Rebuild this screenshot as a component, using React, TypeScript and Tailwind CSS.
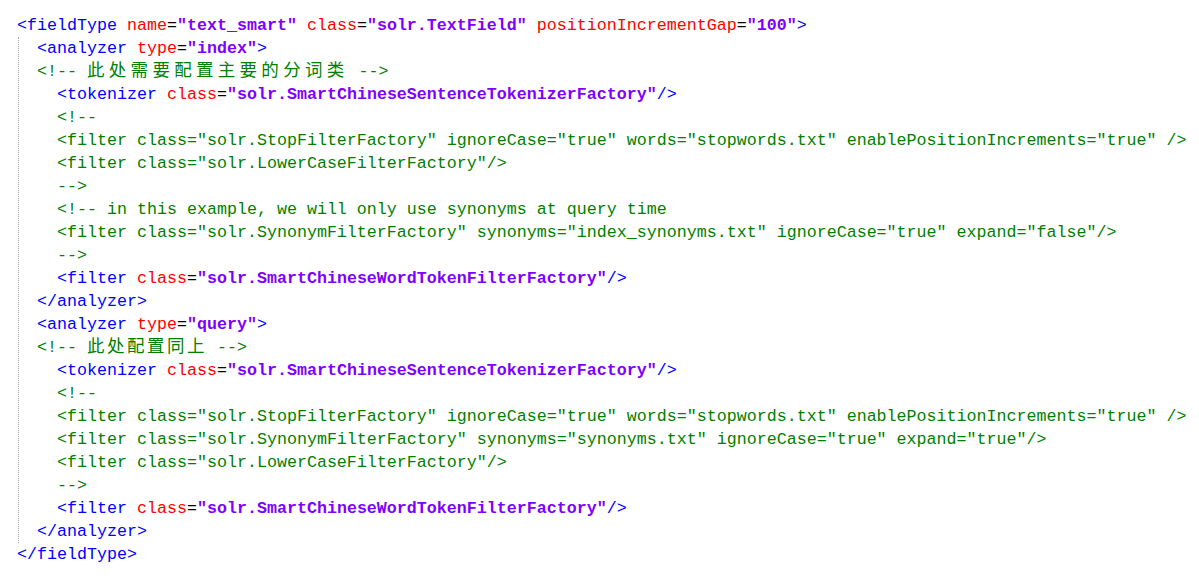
import React from "react";

type Seg = { cls: string; text: string };

// very small xml highlighter, notepad++ colours
function tagLine(src: string): Seg[] {
  const out: Seg[] = [];
  const re = /(<\/?\w+)|(\s+)|(\w+)(=)("[^"]*")|(\/?>)/g;
  let m: RegExpExecArray | null;
  while ((m = re.exec(src))) {
    if (m[1]) out.push({ cls: "text-[#0000ff]", text: m[1] });
    else if (m[2]) out.push({ cls: "", text: m[2] });
    else if (m[3]) {
      out.push({ cls: "text-[#ff0000]", text: m[3] });
      out.push({ cls: "text-black", text: m[4] });
      out.push({ cls: "text-[#8000ff] font-bold", text: m[5] });
    } else if (m[6]) out.push({ cls: "text-[#0000ff]", text: m[6] });
  }
  return out;
}

const green = "text-[#008000]";

type Line = { indent: number; segs: Seg[] };

const t = (indent: number, s: string): Line => ({ indent, segs: tagLine(s) });
const c = (indent: number, s: string): Line => ({ indent, segs: [{ cls: green, text: s }] });

// cjk glyphs get a fixed cell so the comment ends where the editor put it
function CjkComment({ text, cell }: { text: string; cell: string }) {
  return (
    <span className={green}>
      {"<!-- "}
      {Array.from(text).map((ch, i) => (
        <span
          key={i}
          className={`inline-block ${cell} font-['Noto_Sans_CJK_SC',sans-serif] text-[17.5px] leading-none`}
        >
          {ch}
        </span>
      ))}
      {" -->"}
    </span>
  );
}

const inner: (Line | "cjk1" | "cjk2")[] = [
  t(0, '<analyzer type="index">'),
  "cjk1",
  t(1, '<tokenizer class="solr.SmartChineseSentenceTokenizerFactory"/>'),
  c(1, "<!--"),
  c(1, '<filter class="solr.StopFilterFactory" ignoreCase="true" words="stopwords.txt" enablePositionIncrements="true" />'),
  c(1, '<filter class="solr.LowerCaseFilterFactory"/>'),
  c(1, "-->"),
  c(1, "<!-- in this example, we will only use synonyms at query time"),
  c(1, '<filter class="solr.SynonymFilterFactory" synonyms="index_synonyms.txt" ignoreCase="true" expand="false"/>'),
  c(1, "-->"),
  t(1, '<filter class="solr.SmartChineseWordTokenFilterFactory"/>'),
  t(0, "</analyzer>"),
  t(0, '<analyzer type="query">'),
  "cjk2",
  t(1, '<tokenizer class="solr.SmartChineseSentenceTokenizerFactory"/>'),
  c(1, "<!--"),
  c(1, '<filter class="solr.StopFilterFactory" ignoreCase="true" words="stopwords.txt" enablePositionIncrements="true" />'),
  c(1, '<filter class="solr.SynonymFilterFactory" synonyms="synonyms.txt" ignoreCase="true" expand="true"/>'),
  c(1, '<filter class="solr.LowerCaseFilterFactory"/>'),
  c(1, "-->"),
  t(1, '<filter class="solr.SmartChineseWordTokenFilterFactory"/>'),
  t(0, "</analyzer>"),
];

function Row({ line }: { line: Line }) {
  return (
    <div className="h-[23px] whitespace-pre">
      {line.indent > 0 && <span>{"  ".repeat(line.indent)}</span>}
      {line.segs.map((s, i) => (
        <span key={i} className={s.cls}>
          {s.text}
        </span>
      ))}
    </div>
  );
}

export default function App() {
  const head = tagLine('<fieldType name="text_smart" class="solr.TextField" positionIncrementGap="100">');
  const tail = tagLine("</fieldType>");
  return (
    <div className="min-h-[583px] bg-white pt-[14px] pl-[17px] font-['Liberation_Mono',monospace] text-[16.667px] leading-[23px] text-black">
      <Row line={{ indent: 0, segs: head }} />
      {/* fold guide */}
      <div className="ml-px border-l border-dotted border-[#a8a8a8] pl-[18px]">
        {inner.map((l, i) =>
          l === "cjk1" ? (
            <div key={i} className="h-[23px] whitespace-pre">
              <CjkComment text="此处需要配置主要的分词类" cell="w-[21.8px]" />
            </div>
          ) : l === "cjk2" ? (
            <div key={i} className="h-[23px] whitespace-pre">
              <CjkComment text="此处配置同上" cell="w-[20px]" />
            </div>
          ) : (
            <Row key={i} line={l} />
          )
        )}
      </div>
      <Row line={{ indent: 0, segs: tail }} />
    </div>
  );
}
